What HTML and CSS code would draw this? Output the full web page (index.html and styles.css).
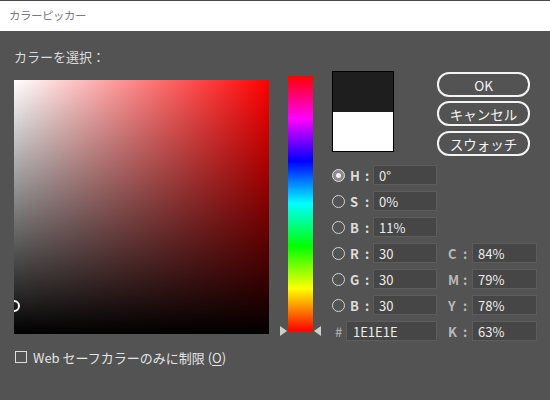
FILE: index.html
```html
<!DOCTYPE html>
<html lang="ja">
<head>
<meta charset="utf-8">
<title>カラーピッカー</title>
<link rel="stylesheet" href="styles.css">
</head>
<body>
<div class="window">
  <div class="titlebar">カラーピッカー</div>
  <div class="panel">
    <div class="col-field">
      <div class="pick-label">カラーを選択：</div>
      <div class="field">
        <div class="field-dark"></div>
        <div class="marker"></div>
      </div>
      <label class="websafe"><span class="checkbox"></span>Web セーフカラーのみに制限 (<u>O</u>)</label>
    </div>
    <div class="col-hue">
      <div class="hue">
        <span class="tri tri-left"></span>
        <span class="tri tri-right"></span>
      </div>
    </div>
    <div class="col-right">
      <div class="top">
        <div class="swatch">
          <div class="sw-new"></div>
          <div class="sw-old"></div>
        </div>
        <div class="buttons">
          <div class="btn">OK</div>
          <div class="btn">キャンセル</div>
          <div class="btn">スウォッチ</div>
        </div>
      </div>
      <div class="values">
        <div class="lab"><span class="radio on"></span><b>H</b><span class="colon">:</span></div>
        <div class="inp">0°</div>
        <div></div><div></div>

        <div class="lab"><span class="radio"></span><b>S</b><span class="colon">:</span></div>
        <div class="inp">0%</div>
        <div></div><div></div>

        <div class="lab"><span class="radio"></span><b>B</b><span class="colon">:</span></div>
        <div class="inp">11%</div>
        <div></div><div></div>

        <div class="lab"><span class="radio"></span><b>R</b><span class="colon">:</span></div>
        <div class="inp">30</div>
        <div class="clab"><b>C</b><span class="colon">:</span></div>
        <div class="inp">84%</div>

        <div class="lab"><span class="radio"></span><b>G</b><span class="colon">:</span></div>
        <div class="inp">30</div>
        <div class="clab"><b>M</b><span class="colon">:</span></div>
        <div class="inp">79%</div>

        <div class="lab"><span class="radio"></span><b>B</b><span class="colon">:</span></div>
        <div class="inp">30</div>
        <div class="clab"><b>Y</b><span class="colon">:</span></div>
        <div class="inp">78%</div>

        <div class="hexcell"><span class="hash">#</span><div class="inp hex">1E1E1E</div></div>
        <div class="clab"><b>K</b><span class="colon">:</span></div>
        <div class="inp">63%</div>
      </div>
    </div>
  </div>
</div>
</body>
</html>
```

FILE: styles.css
```css
* { box-sizing: border-box; }
html, body { margin: 0; padding: 0; }
body {
  width: 550px;
  height: 400px;
  overflow: hidden;
  background: #535353;
  font-family: "Noto Sans CJK JP", "Noto Sans", sans-serif;
  color: #e2e2e2;
}
.window { width: 550px; height: 400px; display: flex; flex-direction: column; }
.titlebar {
  height: 31px;
  background: #ffffff;
  border-top: 1px solid #4a4a4a;
  color: #7a7a7a;
  font-size: 11.5px;
  line-height: 29px;
  padding-left: 9px;
  letter-spacing: -0.5px;
}
.panel {
  flex: 1;
  display: flex;
  padding-left: 14px;
}
.col-field { width: 255px; display: flex; flex-direction: column; }
.pick-label {
  margin-top: 17px;
  height: 18px;
  line-height: 18px;
  font-size: 13px;
  color: #dcdcdc;
}
.field {
  margin-top: 14px;
  width: 255px;
  height: 254px;
  position: relative;
  overflow: hidden;
  background: linear-gradient(to right, #ffffff, #ff0000);
}
.field-dark {
  position: absolute;
  inset: 0;
  background: linear-gradient(to bottom, rgba(0,0,0,0), #000000);
}
.marker {
  position: absolute;
  left: -6px;
  top: 220px;
  width: 12px;
  height: 12px;
  border: 2px solid #ffffff;
  border-radius: 50%;
}
.websafe {
  margin-top: 16px;
  display: flex;
  align-items: center;
  font-size: 13px;
  color: #e4e4e4;
  height: 14px;
  padding-left: 1px;
}
.checkbox {
  width: 12px;
  height: 12px;
  border: 1px solid #dddddd;
  margin-right: 6px;
  flex: none;
}
.websafe u { text-underline-offset: 2px; }

.col-hue { margin-left: 19px; padding-top: 45px; }
.hue {
  position: relative;
  width: 25px;
  height: 255px;
  background: linear-gradient(to bottom, #ff0000 0%, #ff00ff 16.66%, #0000ff 33.33%, #00ffff 50%, #00ff00 66.66%, #ffff00 83.33%, #ff0000 100%);
}
.tri {
  position: absolute;
  bottom: -5px;
  width: 0; height: 0;
  border-top: 5px solid transparent;
  border-bottom: 5px solid transparent;
}
.tri-left { left: -8px; border-left: 7px solid #cfcfcf; }
.tri-right { right: -8px; border-right: 7px solid #cfcfcf; }

.col-right { margin-left: 19px; display: flex; flex-direction: column; }
.top { display: flex; margin-top: 40px; }
.swatch {
  width: 62px;
  height: 81px;
  border: 1px solid #000000;
  display: flex;
  flex-direction: column;
}
.sw-new { height: 40px; background: #1e1e1e; }
.sw-old { flex: 1; background: #ffffff; }
.buttons {
  margin-left: 43px;
  margin-top: 1px;
  display: flex;
  flex-direction: column;
  gap: 4px;
}
.btn {
  width: 93px;
  height: 25px;
  border: 2px solid #f4f4f4;
  border-radius: 12px;
  color: #f4f4f4;
  font-size: 13.5px;
  display: flex;
  align-items: center;
  justify-content: center;
}
.btn + .btn + .btn { margin-top: 1px; }

.values {
  margin-top: 9px;
  display: grid;
  grid-template-columns: 41px 64px 35px 65px;
  grid-auto-rows: 20px;
  row-gap: 6px;
  font-size: 13px;
}
.lab, .clab {
  display: flex;
  align-items: center;
  color: #dcdcdc;
}
.lab b, .clab b { font-weight: 700; width: 11px; }
.clab { padding-left: 11px; color: #b9b9b9; }
.colon { margin-left: 4px; font-weight: 700; }
.radio {
  width: 13px;
  height: 13px;
  border: 1.5px solid #d4d4d4;
  border-radius: 50%;
  margin-right: 5px;
  flex: none;
  display: flex;
  align-items: center;
  justify-content: center;
}
.radio.on { background: #8a8a8a; border-color: #e0e0e0; }
.radio.on::after {
  content: "";
  width: 5px;
  height: 5px;
  border-radius: 50%;
  background: #f0f0f0;
}
.inp {
  background: #464646;
  border: 1px solid #5d5d5d;
  color: #ececec;
  padding-left: 5px;
  display: flex;
  align-items: center;
  font-size: 13px;
}
.hexcell {
  grid-column: 1 / 3;
  display: flex;
  align-items: center;
}
.hash { color: #bdbdbd; margin-left: 3px; width: 11px; font-size: 13px; }
.hex { width: 91px; height: 20px; padding-left: 6px; }
```
